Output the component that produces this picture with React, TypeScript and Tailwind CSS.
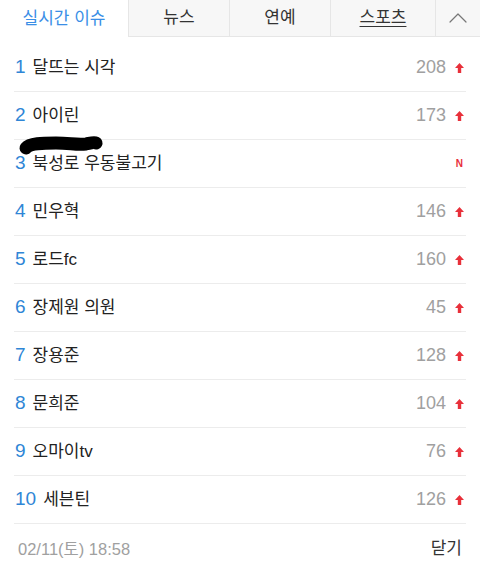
import { ChevronUp } from 'lucide-react';

interface Issue {
  rank: number;
  title: string;
  count?: number;
  isNew?: boolean;
}

const ISSUES: Issue[] = [
  { rank: 1, title: '달뜨는 시각', count: 208 },
  { rank: 2, title: '아이린', count: 173 },
  { rank: 3, title: '북성로 우동불고기', isNew: true },
  { rank: 4, title: '민우혁', count: 146 },
  { rank: 5, title: '로드fc', count: 160 },
  { rank: 6, title: '장제원 의원', count: 45 },
  { rank: 7, title: '장용준', count: 128 },
  { rank: 8, title: '문희준', count: 104 },
  { rank: 9, title: '오마이tv', count: 76 },
  { rank: 10, title: '세븐틴', count: 126 },
];

const TABS = ['뉴스', '연예', '스포츠'];

function UpArrow() {
  return (
    <svg width="9" height="10" viewBox="0 0 9 10" className="ml-[9px]">
      <path d="M4.5 0 L9 5 L6.2 5 L6.2 10 L2.8 10 L2.8 5 L0 5 Z" fill="#e8303a" />
    </svg>
  );
}

function Scribble() {
  // marker scribble hiding text under row 2
  return (
    <svg width="96" height="28" viewBox="0 0 96 28" className="absolute left-0 top-[39px]">
      <path
        d="M12 17 C 16 12, 28 12, 42 12 C 56 12, 62 14, 72 13 C 77 12, 80 11, 82 12"
        stroke="#000"
        strokeWidth="13"
        strokeLinecap="round"
        fill="none"
      />
    </svg>
  );
}

export default function App() {
  return (
    <div
      className="w-[480px] h-[563px] bg-white overflow-hidden"
      style={{ fontFamily: '"Liberation Sans", "Noto Sans CJK KR", sans-serif' }}
    >
      {/* tab bar */}
      <div className="flex h-[37px]">
        <div className="w-[128px] flex items-center justify-center text-[17px] text-[#3a8ee6] bg-white">
          실시간 이슈
        </div>
        {TABS.map((t, i) => (
          <div
            key={t}
            className={`flex items-center justify-center text-[17px] text-[#333] bg-[#f7f7f7] border-l border-b border-[#e6e6e6] ${
              i === 2 ? 'w-[105px]' : 'w-[101px]'
            }`}
          >
            <span className={i === 2 ? 'underline underline-offset-[3px] decoration-1' : ''}>{t}</span>
          </div>
        ))}
        <div className="flex-1 flex items-center justify-center bg-[#f7f7f7] border-l border-b border-[#e6e6e6]">
          <ChevronUp size={32} strokeWidth={0.9} color="#777" />
        </div>
      </div>

      {/* ranking list */}
      <div className="pt-[7px] px-[14px]">
        {ISSUES.map((item) => (
          <div
            key={item.rank}
            className="relative flex items-center h-[48px] border-b border-[#ececec]"
          >
            <span className="text-[19px] text-[#2f86d6] ml-[1px] mr-[7px]">{item.rank}</span>
            <span className="text-[17px] text-[#222]">{item.title}</span>
            <div className="ml-auto flex items-center mr-[2px]">
              {item.isNew ? (
                <span className="text-[10px] font-bold text-[#e8303a] leading-none mr-[1px]">N</span>
              ) : (
                <>
                  <span className="text-[18px] text-[#a0a0a0]">{item.count}</span>
                  <UpArrow />
                </>
              )}
            </div>
            {item.rank === 2 && <Scribble />}
          </div>
        ))}
      </div>

      {/* footer */}
      <div className="flex items-center justify-between h-[50px] pl-[18px] pr-[18px]">
        <span className="text-[16.5px] text-[#a0a0a0]">02/11(토) 18:58</span>
        <span className="text-[17px] text-[#333]">닫기</span>
      </div>
    </div>
  );
}
